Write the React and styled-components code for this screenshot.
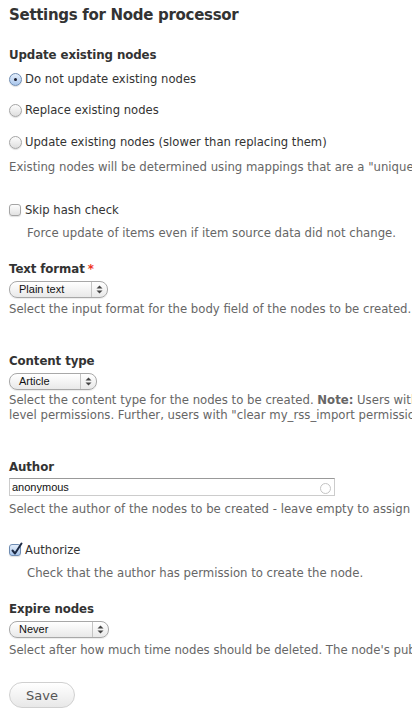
import React from 'react';
import styled, { createGlobalStyle } from 'styled-components';

const GlobalStyle = createGlobalStyle`
  html, body {
    margin: 0;
    padding: 0;
    background: #fff;
    overflow: hidden;
  }
  body {
    font-family: "DejaVu Sans", "Liberation Sans", sans-serif;
    color: #333;
  }
`;

const Page = styled.div`
  width: 760px;
  padding: 4px 0 0 9px;
`;

const Title = styled.h2`
  margin: 0;
  font-size: 15px;
  letter-spacing: -0.3px;
  line-height: 22px;
  font-weight: bold;
  color: #333;
`;

const Item = styled.div`
  margin-top: ${(p) => p.$mt || 0}px;
`;

const Label = styled.div`
  font-size: 11.8px;
  letter-spacing: -0.1px;
  line-height: 18px;
  font-weight: bold;
  color: #333;
`;

const Required = styled.span`
  color: #e32;
  margin-left: 3px;
`;

const Option = styled.label`
  display: flex;
  align-items: center;
  gap: 3px;
  font-size: 11.6px;
  line-height: 18px;
  color: #333;
`;

const Description = styled.div`
  font-size: 11.7px;
  line-height: 15px;
  color: #666;
  white-space: nowrap;
  padding-left: ${(p) => (p.$indent ? 18 : 0)}px;
`;

const Radio = styled.span`
  position: relative;
  width: 13px;
  height: 13px;
  border-radius: 50%;
  border: 1px solid ${(p) => (p.$on ? '#6e8cb2' : '#a5a5a5')};
  background: ${(p) =>
    p.$on ? 'linear-gradient(#e4eefb, #a9c6ec)' : 'linear-gradient(#fdfdfd, #dedede)'};
  box-sizing: border-box;
  flex: none;
  box-shadow: 0 1px 1px rgba(0, 0, 0, 0.12);
  &::after {
    content: '';
    display: ${(p) => (p.$on ? 'block' : 'none')};
    position: absolute;
    left: 4px;
    top: 4px;
    width: 3px;
    height: 3px;
    border-radius: 50%;
    background: #1a1a2a;
  }
`;

const Check = styled.span`
  position: relative;
  width: 12px;
  height: 12px;
  border-radius: 3px;
  border: 1px solid ${(p) => (p.$on ? '#6e8cb2' : '#a5a5a5')};
  background: ${(p) =>
    p.$on ? 'linear-gradient(#e4eefb, #a9c6ec)' : 'linear-gradient(#fdfdfd, #e2e2e2)'};
  box-sizing: border-box;
  flex: none;
  margin-right: 1px;
  box-shadow: 0 1px 1px rgba(0, 0, 0, 0.12);
  svg {
    position: absolute;
    left: 0px;
    top: -3px;
  }
`;

const Select = styled.div`
  display: flex;
  align-items: stretch;
  width: ${(p) => p.$w}px;
  height: 17px;
  box-sizing: border-box;
  border: 1px solid #a8a8a8;
  border-radius: 8px;
  background: linear-gradient(#ffffff, #e9e9e9);
  font-family: "Liberation Sans", Arial, sans-serif;
  font-size: 11px;
  color: #111;
  box-shadow: 0 1px 1px rgba(0, 0, 0, 0.08);
`;

const SelectText = styled.span`
  flex: 1;
  padding-left: 9px;
  line-height: 15px;
`;

const SelectArrows = styled.span`
  width: 15px;
  border-left: 1px solid #c4c4c4;
  display: flex;
  align-items: center;
  justify-content: center;
`;

const TextInput = styled.div`
  display: flex;
  align-items: center;
  width: 326px;
  height: 18px;
  box-sizing: border-box;
  border: 1px solid #ccc;
  border-top-color: #999;
  padding: 0 3px 0 2px;
  font-family: "Liberation Sans", Arial, sans-serif;
  font-size: 11px;
  color: #111;
`;

const InputValue = styled.span`
  flex: 1;
`;

const Throbber = styled.span`
  width: 11px;
  height: 11px;
  border-radius: 50%;
  border: 1.5px solid #c4c4c4;
  box-sizing: border-box;
  margin-top: 2px;
`;

const Button = styled.button`
  display: block;
  width: 66px;
  height: 26px;
  border: 1px solid #d0d0d0;
  border-radius: 13px;
  background: linear-gradient(#ffffff, #e8e8e8);
  font-family: "DejaVu Sans", sans-serif;
  font-size: 13px;
  color: #555;
  padding: 0;
`;

function Arrows() {
  return (
    <svg width="7" height="9" viewBox="0 0 7 9">
      <path d="M3.5 0.5 L6.5 3.5 H0.5 Z" fill="#444" />
      <path d="M3.5 8.5 L6.5 5.5 H0.5 Z" fill="#444" />
    </svg>
  );
}

function SelectBox({ value, width }) {
  return (
    <Select $w={width}>
      <SelectText>{value}</SelectText>
      <SelectArrows>
        <Arrows />
      </SelectArrows>
    </Select>
  );
}

function App() {
  return (
    <>
      <GlobalStyle />
      <Page>
        <Title>Settings for Node processor</Title>

        <Item $mt={20}>
          <Label>Update existing nodes</Label>
        </Item>
        <Item $mt={6}>
          <Option>
            <Radio $on />
            Do not update existing nodes
          </Option>
        </Item>
        <Item $mt={13}>
          <Option>
            <Radio />
            Replace existing nodes
          </Option>
        </Item>
        <Item $mt={14}>
          <Option>
            <Radio />
            Update existing nodes (slower than replacing them)
          </Option>
        </Item>
        <Item $mt={9}>
          <Description>
            Existing nodes will be determined using mappings that are a "unique target". For each
            existing node the action selected above will be taken.
          </Description>
        </Item>

        <Item $mt={26}>
          <Option>
            <Check />
            Skip hash check
          </Option>
        </Item>
        <Item $mt={7}>
          <Description $indent>Force update of items even if item source data did not change.</Description>
        </Item>

        <Item $mt={19}>
          <Label>
            Text format<Required>*</Required>
          </Label>
        </Item>
        <Item $mt={3}>
          <SelectBox value="Plain text" width={99} />
        </Item>
        <Item $mt={4}>
          <Description>Select the input format for the body field of the nodes to be created.</Description>
        </Item>

        <Item $mt={35}>
          <Label>Content type</Label>
        </Item>
        <Item $mt={3}>
          <SelectBox value="Article" width={88} />
        </Item>
        <Item $mt={3}>
          <Description>
            Select the content type for the nodes to be created. <strong>Note:</strong> Users with
            "import my_rss_import feeds" permissions will be able to <strong>import</strong> nodes of
            the content type selected here regardless of the node level permissions.
            <br />
            level permissions. Further, users with "clear my_rss_import permissions" will be able to
            <strong> delete</strong> imported nodes regardless of their node level permissions.
          </Description>
        </Item>

        <Item $mt={35}>
          <Label>Author</Label>
        </Item>
        <Item $mt={2}>
          <TextInput>
            <InputValue>anonymous</InputValue>
            <Throbber />
          </TextInput>
        </Item>
        <Item $mt={6}>
          <Description>
            Select the author of the nodes to be created - leave empty to assign "anonymous".
          </Description>
        </Item>

        <Item $mt={24}>
          <Option>
            <Check $on>
              <svg width="13" height="14" viewBox="0 0 13 14">
                <path
                  d="M2.5 8.5 L5 11.5 L11.5 1.5"
                  fill="none"
                  stroke="#1d2a44"
                  strokeWidth="2"
                  strokeLinecap="round"
                  strokeLinejoin="round"
                />
              </svg>
            </Check>
            Authorize
          </Option>
        </Item>
        <Item $mt={7}>
          <Description $indent>Check that the author has permission to create the node.</Description>
        </Item>

        <Item $mt={19}>
          <Label>Expire nodes</Label>
        </Item>
        <Item $mt={3}>
          <SelectBox value="Never" width={100} />
        </Item>
        <Item $mt={5}>
          <Description>
            Select after how much time nodes should be deleted. The node's published date will be
            used for determining the node's age, see Mapping settings.
          </Description>
        </Item>

        <Item $mt={24}>
          <Button type="button">Save</Button>
        </Item>
      </Page>
    </>
  );
}

export default App;
